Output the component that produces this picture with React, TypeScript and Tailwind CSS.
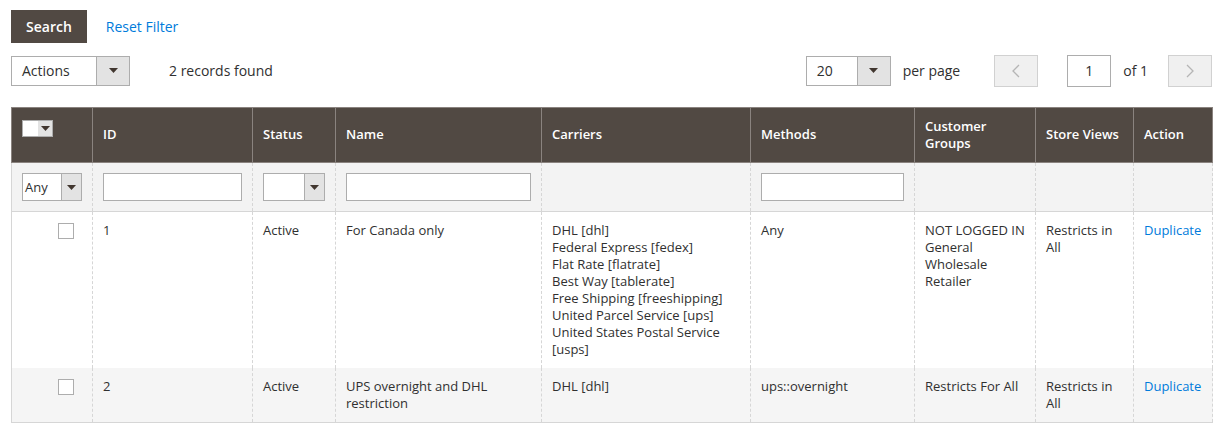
import React from "react";

type Row = {
  id: string;
  status: string;
  name: string[];
  carriers: string[];
  methods: string;
  groups: string[];
  stores: string[];
};

const rows: Row[] = [
  {
    id: "1",
    status: "Active",
    name: ["For Canada only"],
    carriers: [
      "DHL [dhl]",
      "Federal Express [fedex]",
      "Flat Rate [flatrate]",
      "Best Way [tablerate]",
      "Free Shipping [freeshipping]",
      "United Parcel Service [ups]",
      "United States Postal Service",
      "[usps]",
    ],
    methods: "Any",
    groups: ["NOT LOGGED IN", "General", "Wholesale", "Retailer"],
    stores: ["Restricts in", "All"],
  },
  {
    id: "2",
    status: "Active",
    name: ["UPS overnight and DHL", "restriction"],
    carriers: ["DHL [dhl]"],
    methods: "ups::overnight",
    groups: ["Restricts For All"],
    stores: ["Restricts in", "All"],
  },
];

const Caret = () => (
  <svg width="9" height="5" viewBox="0 0 9 5">
    <path d="M0 0h9L4.5 5z" fill="#41362f" />
  </svg>
);

const Chevron = ({ dir }: { dir: "left" | "right" }) => (
  <svg width="8" height="14" viewBox="0 0 8 14">
    <path
      d={dir === "left" ? "M7 1L1 7l6 6" : "M1 1l6 6-6 6"}
      fill="none"
      stroke="#b5b5b5"
      strokeWidth="1.3"
    />
  </svg>
);

const cols = [81, 160, 83, 206, 209, 164, 121, 98, 79];
const heads = ["", "ID", "Status", "Name", "Carriers", "Methods", "Customer Groups", "Store Views", "Action"];

const cell = "border-l border-dashed border-[#d6d6d6] pl-[10px] pr-[8px] pt-[10px] pb-[10px] align-top";

export default function App() {
  return (
    <div
      className="w-[1225px] h-[433px] bg-white text-[#303030] px-[11px] pt-[10px]"
      style={{ fontFamily: '"Open Sans", sans-serif' }}
    >
      <div className="flex items-center h-[33px]">
        <button className="h-[33px] px-[15px] bg-[#514943] text-white text-[14px] font-semibold">Search</button>
        <span className="ml-[19px] text-[14px] text-[#007bdb]">Reset Filter</span>
      </div>

      <div className="flex items-center mt-[12px] h-[31px]">
        <div className="flex h-[30px] w-[119px] border border-[#adadad] bg-white">
          <span className="flex-1 pl-[10px] text-[14px] leading-[27px]">Actions</span>
          <span className="w-[33px] flex items-center justify-center bg-[#e3e3e3] border-l border-[#adadad]">
            <Caret />
          </span>
        </div>
        <span className="ml-[39px] text-[14px] leading-[29px]">2 records found</span>

        <div className="ml-auto mr-[2px] flex items-center">
          <div className="flex h-[30px] w-[85px] border border-[#adadad] bg-white">
            <span className="flex-1 pl-[10px] text-[14px] leading-[27px]">20</span>
            <span className="w-[33px] flex items-center justify-center bg-[#e3e3e3] border-l border-[#adadad]">
              <Caret />
            </span>
          </div>
          <span className="ml-[12px] text-[14px]">per page</span>
          <span className="ml-[34px] w-[44px] h-[32px] flex items-center justify-center bg-[#f0f0f0] border border-[#d1d1d1]">
            <Chevron dir="left" />
          </span>
          <span className="ml-[29px] w-[44px] h-[32px] flex items-center justify-center border border-[#adadad] text-[14px]">
            1
          </span>
          <span className="ml-[12px] text-[14px]">of 1</span>
          <span className="ml-[20px] w-[44px] h-[32px] flex items-center justify-center bg-[#f0f0f0] border border-[#d1d1d1]">
            <Chevron dir="right" />
          </span>
        </div>
      </div>

      <table className="mt-[21px] w-[1201px] table-fixed border-collapse text-[13px] leading-[17px]">
        <colgroup>
          {cols.map((w, i) => (
            <col key={i} style={{ width: w }} />
          ))}
        </colgroup>
        <thead>
          <tr className="h-[55px] bg-[#514943]">
            {heads.map((h, i) =>
              i === 0 ? (
                <th key={i} className="border border-[#8a837f] px-[10px] pt-[12px] align-top">
                  <div className="flex w-[31px] h-[17px] border border-[#adadad]">
                    <span className="w-[15px] bg-white" />
                    <span className="flex-1 bg-[#e3e3e3] flex items-center justify-center">
                      <Caret />
                    </span>
                  </div>
                </th>
              ) : (
                <th
                  key={i}
                  className="border border-[#8a837f] pl-[10px] pr-[6px] pb-[1px] text-left align-middle font-semibold text-white"
                >
                  {h === "Customer Groups" ? (
                    <>
                      Customer
                      <br />
                      Groups
                    </>
                  ) : (
                    h
                  )}
                </th>
              )
            )}
          </tr>
        </thead>
        <tbody>
          <tr className="h-[49px] bg-[#f3f3f3] border-b border-[#d6d6d6]">
            <td className="border-l border-[#d6d6d6] px-[10px]">
              <div className="flex w-[60px] h-[28px] border border-[#adadad] bg-white">
                <span className="flex-1 pl-[2px] leading-[26px] text-[13px]">Any</span>
                <span className="w-[20px] flex items-center justify-center bg-[#e3e3e3] border-l border-[#adadad]">
                  <Caret />
                </span>
              </div>
            </td>
            <td className="border-l border-dashed border-[#d6d6d6] px-[10px]">
              <div className="h-[28px] border border-[#adadad] bg-white" />
            </td>
            <td className="border-l border-dashed border-[#d6d6d6] px-[10px]">
              <div className="flex h-[28px] border border-[#adadad] bg-white">
                <span className="flex-1" />
                <span className="w-[20px] flex items-center justify-center bg-[#e3e3e3] border-l border-[#adadad]">
                  <Caret />
                </span>
              </div>
            </td>
            <td className="border-l border-dashed border-[#d6d6d6] px-[10px]">
              <div className="h-[28px] border border-[#adadad] bg-white" />
            </td>
            <td className="border-l border-dashed border-[#d6d6d6]" />
            <td className="border-l border-dashed border-[#d6d6d6] px-[10px]">
              <div className="h-[28px] border border-[#adadad] bg-white" />
            </td>
            <td className="border-l border-dashed border-[#d6d6d6]" />
            <td className="border-l border-dashed border-[#d6d6d6]" />
            <td className="border-l border-r border-dashed border-[#d6d6d6]" />
          </tr>
          {rows.map((r, idx) => (
            <tr key={r.id} className={idx % 2 ? "bg-[#f5f5f5] border-b border-[#d6d6d6]" : "bg-white"}>
              <td className="border-l border-[#d6d6d6] pt-[11px] pb-[9px] align-top">
                <div className="ml-[46px] w-[16px] h-[16px] border border-[#adadad] bg-white" />
              </td>
              <td className={cell}>{r.id}</td>
              <td className={cell}>{r.status}</td>
              <td className={cell}>
                {r.name.map((t) => (
                  <div key={t}>{t}</div>
                ))}
              </td>
              <td className={cell}>
                {r.carriers.map((t) => (
                  <div key={t}>{t}</div>
                ))}
              </td>
              <td className={cell}>{r.methods}</td>
              <td className={cell}>
                {r.groups.map((t) => (
                  <div key={t} className="whitespace-nowrap">
                    {t}
                  </div>
                ))}
              </td>
              <td className={cell}>
                {r.stores.map((t) => (
                  <div key={t}>{t}</div>
                ))}
              </td>
              <td className={`${cell} border-r text-[#007bdb]`}>Duplicate</td>
            </tr>
          ))}
        </tbody>
      </table>
    </div>
  );
}
